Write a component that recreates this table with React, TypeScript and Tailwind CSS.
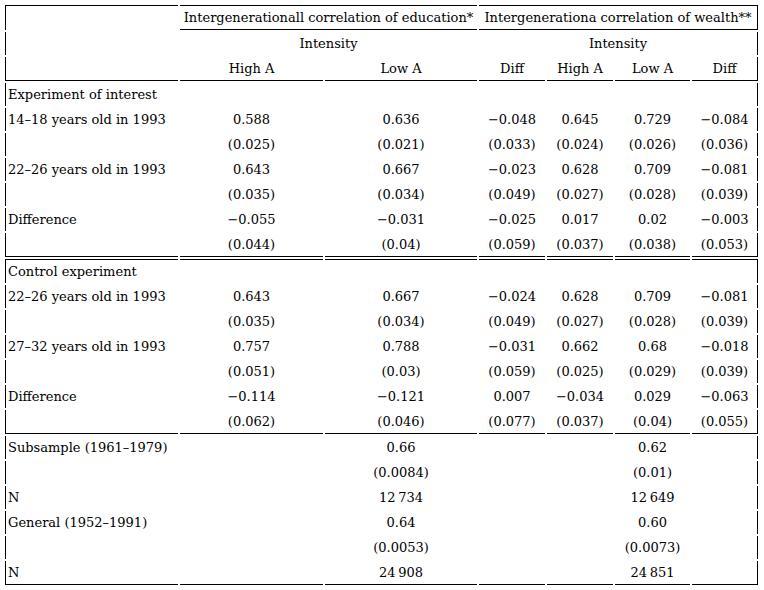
import React from "react";

type Row = { cells: string[]; top?: boolean; bottom?: boolean };

const interest: Row[] = [
  { cells: ["Experiment of interest", "", "", "", "", "", ""] },
  { cells: ["14–18 years old in 1993", "0.588", "0.636", "−0.048", "0.645", "0.729", "−0.084"] },
  { cells: ["", "(0.025)", "(0.021)", "(0.033)", "(0.024)", "(0.026)", "(0.036)"] },
  { cells: ["22–26 years old in 1993", "0.643", "0.667", "−0.023", "0.628", "0.709", "−0.081"] },
  { cells: ["", "(0.035)", "(0.034)", "(0.049)", "(0.027)", "(0.028)", "(0.039)"] },
  { cells: ["Difference", "−0.055", "−0.031", "−0.025", "0.017", "0.02", "−0.003"] },
  { cells: ["", "(0.044)", "(0.04)", "(0.059)", "(0.037)", "(0.038)", "(0.053)"], bottom: true },
];

const control: Row[] = [
  { cells: ["Control experiment", "", "", "", "", "", ""], top: true },
  { cells: ["22–26 years old in 1993", "0.643", "0.667", "−0.024", "0.628", "0.709", "−0.081"] },
  { cells: ["", "(0.035)", "(0.034)", "(0.049)", "(0.027)", "(0.028)", "(0.039)"] },
  { cells: ["27–32 years old in 1993", "0.757", "0.788", "−0.031", "0.662", "0.68", "−0.018"] },
  { cells: ["", "(0.051)", "(0.03)", "(0.059)", "(0.025)", "(0.029)", "(0.039)"] },
  { cells: ["Difference", "−0.114", "−0.121", "0.007", "−0.034", "0.029", "−0.063"] },
  { cells: ["", "(0.062)", "(0.046)", "(0.077)", "(0.037)", "(0.04)", "(0.055)"], bottom: true },
];

const samples: Row[] = [
  { cells: ["Subsample (1961–1979)", "", "0.66", "", "", "0.62", ""] },
  { cells: ["", "", "(0.0084)", "", "", "(0.01)", ""] },
  { cells: ["N", "", "12\u202f734", "", "", "12\u202f649", ""] },
  { cells: ["General (1952–1991)", "", "0.64", "", "", "0.60", ""] },
  { cells: ["", "", "(0.0053)", "", "", "(0.0073)", ""] },
  { cells: ["N", "", "24\u202f908", "", "", "24\u202f851", ""], bottom: true },
];

const cell = "p-0 px-[2px] leading-[23px] whitespace-nowrap border-black";

function BodyRow({ row }: { row: Row }) {
  return (
    <tr>
      {row.cells.map((c, i) => {
        const cls = [
          cell,
          i === 0 ? "text-left border-l" : "text-center",
          i === 6 ? "border-r" : "",
          row.top ? "border-t" : "",
          row.bottom ? "border-b" : "",
        ].join(" ");
        return (
          <td key={i} className={cls}>
            {c}
          </td>
        );
      })}
    </tr>
  );
}

export default function App() {
  const subHeads = ["High A", "Low A", "Diff", "High A", "Low A", "Diff"];
  return (
    <div className="bg-white text-black p-[3px] font-['DejaVu_Serif',serif] text-[13px]">
      <table className="table-fixed border-separate border-spacing-[2px]">
        <colgroup>
          <col className="w-[173px]" />
          <col className="w-[143px]" />
          <col className="w-[152px]" />
          <col className="w-[66px]" />
          <col className="w-[66px]" />
          <col className="w-[75px]" />
          <col className="w-[66px]" />
        </colgroup>
        <thead>
          <tr>
            <td className={`${cell} border-l border-t`}></td>
            <td colSpan={2} className={`${cell} text-center border-t border-b`}>
              Intergenerationall correlation of education*
            </td>
            <td colSpan={4} className={`${cell} text-center border-t border-b border-r`}>
              Intergenerationa correlation of wealth**
            </td>
          </tr>
          <tr>
            <td className={`${cell} border-l`}></td>
            <td colSpan={2} className={`${cell} text-center`}>
              Intensity
            </td>
            <td colSpan={4} className={`${cell} text-center border-r`}>
              Intensity
            </td>
          </tr>
          <tr>
            <td className={`${cell} border-l border-b`}></td>
            {subHeads.map((h, i) => (
              <td key={i} className={`${cell} text-center border-b ${i === 5 ? "border-r" : ""}`}>
                {h}
              </td>
            ))}
          </tr>
        </thead>
        <tbody>
          {interest.map((r, i) => (
            <BodyRow key={"a" + i} row={r} />
          ))}
          {control.map((r, i) => (
            <BodyRow key={"b" + i} row={r} />
          ))}
          {samples.map((r, i) => (
            <BodyRow key={"c" + i} row={r} />
          ))}
        </tbody>
      </table>
    </div>
  );
}
